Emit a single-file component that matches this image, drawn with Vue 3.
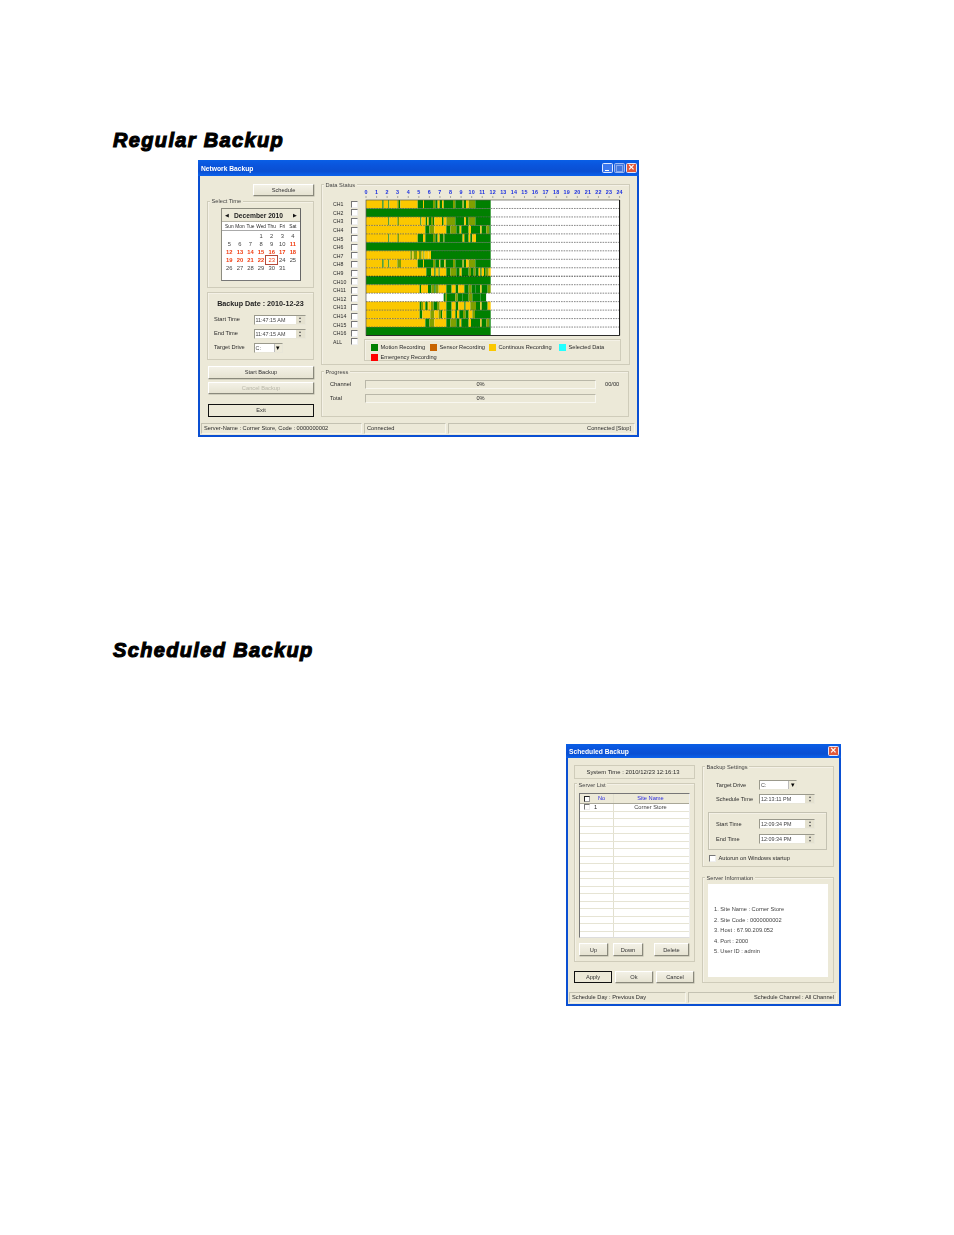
<script setup>
const hours = Array.from({ length: 25 }, (_, i) => i)
const HOUR = 10.567
const ROW = 8.47
const colors = { Y: '#fbc800', G: '#008000', O: '#7fa000', W: '#ffffff' }

// Each channel: colour letter + end position, in 1/3 px from the chart's left edge origin (137) to the end (511)
const rowsRaw = [
  'Y186 G190 Y204 G207 Y231 O236 G240 Y292 G308 Y311 G338 O345 G352 Y358 G365 Y370 G398 O405 G427 Y430 G437 Y445 O465 G511',
  'G511',
  'Y204 G207 Y231 O236 Y300 G303 Y316 G320 Y325 G332 O338 G342 Y365 G370 Y378 O405 G432 Y437 G445 O465 G511',
  'Y315 G327 O342 Y378 G390 O408 G418 Y423 G445 Y452 G480 Y484 G498 O507 G511',
  'Y204 G207 Y231 O236 Y292 G308 Y315 G338 O345 G352 Y358 G370 Y372 G427 Y432 G445 Y450 G456 Y467 G511',
  'G511',
  'Y270 O276 Y280 O290 Y296 O304 Y310 G312 Y325 Y332 G511',
  'Y186 G190 Y204 G207 Y231 O242 Y292 G308 Y311 G338 O345 G357 Y360 G372 Y376 G398 O405 G427 Y430 G437 Y445 O465 G511',
  'Y318 G333 Y342 G346 Y355 G358 Y378 G390 O408 G418 Y424 G445 O452 G460 O466 G475 Y480 G484 Y491 G496 O505 Y511',
  'G511',
  'Y298 G302 Y308 Y323 G333 O342 G346 O355 Y378 G394 Y406 G414 Y432 G445 O454 G466 G480 Y484 G502 O511',
  'W370 G376 O380 G405 O412 G427 G445 O456 G480 G498 W511',
  'Y298 G302 O308 Y315 G320 O324 Y332 O340 G350 O358 Y378 G394 Y406 G414 Y432 G436 Y450 O467 G480 Y484 G502 Y511',
  'Y298 G306 Y330 O342 Y355 O362 G366 Y378 G394 Y405 G410 Y417 G428 O436 G445 Y456 O464 G511',
  'Y315 G327 O342 Y378 G390 O408 G418 Y423 G445 Y452 G480 Y484 G498 O507 G511',
  'G511'
]
const segments = []
rowsRaw.forEach((raw, r) => {
  let start = 137
  raw.split(' ').forEach((s) => {
    const end = Number(s.slice(1))
    segments.push({
      key: r + '-' + end,
      x: +((start - 137) / 3).toFixed(2),
      y: +(r * ROW).toFixed(2),
      w: +((end - start) / 3).toFixed(2),
      fill: colors[s[0]]
    })
    start = end
  })
})
const dashes = Array.from({ length: 15 }, (_, i) => +((i + 1) * ROW).toFixed(2))
const channels = Array.from({ length: 16 }, (_, i) => 'CH' + (i + 1)).concat('ALL')
const dayNames = ['Sun', 'Mon', 'Tue', 'Wed', 'Thu', 'Fri', 'Sat']
const red = new Set([11, 12, 13, 14, 15, 16, 17, 18, 19, 20, 21, 22, 23])
const days = [null, null, null, 1, 2, 3, 4]
for (let d = 5; d <= 31; d++) days.push(d)
const legendTop = [
  { label: 'Motion Recording', color: '#008000', w: 59 },
  { label: 'Sensor Recording', color: '#c86400', w: 59 },
  { label: 'Continous Recording', color: '#fbc800', w: 70 },
  { label: 'Selected Data', color: '#22ffff', w: 50 }
]
const listRows = Array.from({ length: 17 }, (_, i) => i)
const info = ['1. Site Name  : Corner Store', '2. Site Code : 0000000002', '3. Host : 67.90.209.052', '4. Port : 2000', '5. User ID : admin']
</script>

<template>
  <div class="page">
    <h2 class="heading first">Regular Backup</h2>

    <div class="win win-a">
      <div class="title">
        <span>Network Backup</span>
        <div class="title-btns">
          <i class="tb"><b class="min"></b></i>
          <i class="tb off"><b class="max"></b></i>
          <i class="tb close">✕</i>
        </div>
      </div>
      <div class="a-body">
        <div class="a-left">
          <button class="btn sched">Schedule</button>
          <div class="group sel">
            <span class="legend">Select Time</span>
            <div class="cal">
              <div class="cal-head">
                <span class="arr">◀</span><b class="month">December 2010</b><span class="arr">▶</span>
              </div>
              <div class="cal-names"><span v-for="n in dayNames" :key="n">{{ n }}</span></div>
              <div class="cal-days">
                <span
                  v-for="(d, i) in days"
                  :key="i"
                  :class="{ red: red.has(d), today: d === 23 }"
                >{{ d }}</span>
              </div>
            </div>
          </div>
          <div class="group date">
            <div class="date-title">Backup Date : 2010-12-23</div>
            <div class="frow r1"><label>Start Time</label><div class="spin w56"><span>11:47:15 AM</span><em><u>▴</u><u>▾</u></em></div></div>
            <div class="frow r2"><label>End Time</label><div class="spin w56"><span>11:47:15 AM</span><em><u>▴</u><u>▾</u></em></div></div>
            <div class="frow r3"><label>Target Drive</label><div class="combo w29"><span>C:</span><em>▾</em></div></div>
          </div>
          <button class="btn wide start">Start Backup</button>
          <button class="btn wide cancel">Cancel Backup</button>
          <button class="btn wide exit">Exit</button>
        </div>

        <div class="a-right">
          <div class="group status">
            <span class="legend">Data Status</span>
            <div class="status-in">
              <div class="chs">
                <div v-for="c in channels" :key="c" class="ch"><span>{{ c }}</span><i class="cb"></i></div>
              </div>
              <div class="chart-col">
                <svg class="chart" width="262" height="153" viewBox="-4 -15 262 153">
                  <text v-for="h in hours" :key="h" :x="h * HOUR" y="-6.5" class="hr" text-anchor="middle">{{ h }}</text>
                  <line v-for="h in hours" :key="'t' + h" :x1="h * HOUR" :x2="h * HOUR" y1="-4" y2="-2" stroke="#777" stroke-width=".6" />
                  <rect x="0" y="0" width="253.6" height="135.5" fill="#fff" />
                  <rect v-for="s in segments" :key="s.key" :x="s.x" :y="s.y" :width="s.w" height="8.47" :fill="s.fill" />
                  <line v-for="(y, i) in dashes" :key="'d' + i" x1="0" x2="253.6" :y1="y" :y2="y" :stroke="i === 8 ? '#000' : '#555'" stroke-width=".7" stroke-dasharray="1.6 1" />
                  <rect x="0" y="0" width="253.6" height="135.5" fill="none" stroke="#5a5a50" stroke-width=".7" />
                  <line x1="253.6" x2="253.6" y1="0" y2="135.5" stroke="#000" stroke-width=".9" />
                  <line x1="0" x2="253.6" y1="135.5" y2="135.5" stroke="#222" stroke-width=".9" />
                </svg>
                <div class="legend-box">
                  <div class="lg-row">
                    <div v-for="l in legendTop" :key="l.label" class="lg" :style="{ width: l.w + 'px' }">
                      <i :style="{ background: l.color }"></i><span>{{ l.label }}</span>
                    </div>
                  </div>
                  <div class="lg-row">
                    <div class="lg"><i class="emer"></i><span>Emergency Recording</span></div>
                  </div>
                </div>
              </div>
            </div>
          </div>
          <div class="group progress">
            <span class="legend">Progress</span>
            <div class="prow"><label>Channel</label><div class="bar">0%</div><span class="cnt">00/00</span></div>
            <div class="prow"><label>Total</label><div class="bar">0%</div></div>
          </div>
        </div>
      </div>
      <div class="statusbar a-sb">
        <div class="cell c1">Server-Name : Corner Store, Code : 0000000002</div>
        <div class="cell c2">Connected</div>
        <div class="cell c3">Connected [Stop]</div>
      </div>
    </div>

    <h2 class="heading second">Scheduled Backup</h2>

    <div class="win win-b">
      <div class="title small">
        <span>Scheduled Backup</span>
        <div class="title-btns"><i class="tb close">✕</i></div>
      </div>
      <div class="b-body">
        <div class="b-left">
          <div class="systime">System Time : 2010/12/23 12:16:13</div>
          <div class="group servers">
            <span class="legend">Server List</span>
            <div class="list">
              <div class="lh"><div class="c-no"><i class="cb dark"></i><span>No</span></div><div class="c-site">Site Name</div></div>
              <div class="lr"><div class="c-no"><i class="cb"></i><span class="one">1</span></div><div class="c-site ink">Corner Store</div></div>
              <div v-for="r in listRows" :key="r" class="lr"><div class="c-no"></div><div class="c-site"></div></div>
            </div>
            <div class="list-btns">
              <button class="btn up">Up</button>
              <button class="btn down">Down</button>
              <button class="btn del">Delete</button>
            </div>
          </div>
          <div class="b-actions">
            <button class="btn act exit">Apply</button>
            <button class="btn act">Ok</button>
            <button class="btn act">Cancel</button>
          </div>
        </div>
        <div class="b-right">
          <div class="group settings">
            <span class="legend">Backup Settings</span>
            <div class="sr s1"><label>Target Drive</label><div class="combo w38"><span>C:</span><em>▾</em></div></div>
            <div class="sr s2"><label>Schedule Time</label><div class="spin w56"><span>12:13:11 PM</span><em><u>▴</u><u>▾</u></em></div></div>
            <div class="inner">
              <div class="sr"><label>Start Time</label><div class="spin w56"><span>12:09:34 PM</span><em><u>▴</u><u>▾</u></em></div></div>
              <div class="sr s5"><label>End Time</label><div class="spin w56"><span>12:09:34 PM</span><em><u>▴</u><u>▾</u></em></div></div>
            </div>
            <div class="auto"><i class="cb"></i><span>Autorun on Windows startup</span></div>
          </div>
          <div class="group infos">
            <span class="legend">Server Information</span>
            <div class="info-box"><p v-for="t in info" :key="t">{{ t }}</p></div>
          </div>
        </div>
      </div>
      <div class="statusbar b-sb">
        <div class="cell d1">Schedule Day : Previous Day</div>
        <div class="cell d2">Schedule Channel : All Channel</div>
      </div>
    </div>
  </div>
</template>

<style>
html, body { margin: 0; background: #fff; }
</style>

<style scoped>
.page {
  width: 954px;
  height: 1235px;
  overflow: hidden;
  background: #fff;
  font-family: "Liberation Sans", Arial, sans-serif;
  font-size: 5.7px;
  color: #2a2a2a;
  display: flow-root;
}
.heading {
  margin: 0 0 0 113px;
  height: 22px;
  line-height: 22px;
  font-size: 20px;
  font-weight: 700;
  font-style: italic;
  letter-spacing: 1.35px;
  color: #000;
  -webkit-text-stroke: 1.1px #000;
  white-space: nowrap;
}
.first { margin-top: 129px; }
.second { margin-top: 202px; }

.win {
  box-sizing: border-box;
  background: #ece9d8;
  border: 2px solid #0a4fd2;
  border-top: 0;
  display: flex;
  flex-direction: column;
  filter: blur(.3px);
}
.win-a { width: 441px; height: 277px; margin: 9px 0 0 198px; }
.win-b { width: 275px; height: 262px; margin: 83px 0 0 566px; }
.title {
  height: 16px;
  margin: 0 -2px;
  padding: 0 2px 0 3px;
  background: linear-gradient(#0a5fe6, #0a55dd 30%, #0a4fd2 70%, #0b62ec);
  color: #fff;
  font-weight: 700;
  font-size: 6.7px;
  display: flex;
  align-items: center;
  justify-content: space-between;
  flex: none;
}
.title.small { height: 14px; }
.title-btns { display: flex; gap: 1px; }
.tb {
  width: 11px; height: 10.5px;
  box-sizing: border-box;
  border: .5px solid #dfe8ff;
  border-radius: 1.5px;
  background: #3c78ee;
  font-style: normal;
  display: flex;
  align-items: center;
  justify-content: center;
  font-size: 7.5px;
  font-weight: 700;
  line-height: 1;
  color: #fff;
}
.tb.off { background: #5a86e0; opacity: .7; }
.tb.close { background: #e2593a; }
.min { width: 4px; height: 1.5px; background: #fff; margin-top: 5px; margin-right: 2px; }
.max { width: 5px; height: 5px; border: .5px solid #b9cdf7; border-top-width: 1.2px; }

.group {
  box-sizing: border-box;
  position: relative;
  border: 1px solid #cfccba;
  box-shadow: inset .5px .5px 0 #fbfaf3;
  flex: none;
}
.legend {
  position: absolute;
  left: 2px;
  top: -3px;
  line-height: 7px;
  padding: 0 1.5px;
  background: #ece9d8;
  color: #444;
  white-space: nowrap;
}
.sel .legend { top: -4px; }
.servers .legend { top: -2px; }
.btn {
  display: block;
  box-sizing: border-box;
  font: inherit;
  color: #333;
  padding: 0;
  background: linear-gradient(#f3f1e6, #e6e3d2);
  border: 1px solid;
  border-color: #fff #8a897c #8a897c #fff;
  box-shadow: .5px .5px 0 #b4b2a3;
}
.btn.exit { border: 1px solid #111; box-shadow: none; background: #ece9d8; }

/* window A */
.a-body { flex: 1; display: flex; padding: 8px 0 0 7px; gap: 7px; min-height: 0; }
.a-left { width: 107px; flex: none; }
.sched { width: 61px; height: 12px; margin-left: 46px; }
.sel { height: 87px; margin-top: 5px; padding: 6px 0 0 13px; }
.cal {
  box-sizing: border-box;
  width: 80px;
  height: 73px;
  background: #fff;
  border: 1px solid;
  border-color: #8d8c80 #666 #777 #8d8c80;
}
.cal-head {
  height: 12px;
  background: #ece9d8;
  display: flex;
  align-items: center;
  justify-content: space-between;
  padding: 0 3px;
  color: #222;
  font-size: 6.7px;
  border-bottom: .5px solid #b8b6a8;
}
.month { padding-right: 5px; }
.arr { font-size: 5px; color: #111; }
.cal-names {
  display: grid;
  grid-template-columns: repeat(7, 10.6px);
  padding: 2px 1px 0 2px;
  font-size: 4.8px;
  height: 6px;
  text-align: center;
  border-bottom: .5px solid #aaa;
}
.cal-days {
  display: grid;
  grid-template-columns: repeat(7, 10.6px);
  grid-auto-rows: 7.9px;
  padding: 1px 1px 0 2px;
  text-align: center;
  line-height: 8px;
  font-size: 5.8px;
  color: #444;
}
.cal-days .red { color: #f03c10; font-weight: 700; }
.cal-days .today { outline: .7px solid #b34a3a; outline-offset: -.5px; font-weight: 400; }
.date { height: 68px; margin-top: 4px; }
.date-title { text-align: center; margin-top: 7px; font-weight: 700; font-size: 7.2px; color: #222; line-height: 8px; }
.frow { display: flex; align-items: center; padding-left: 6px; height: 10px; }
.frow label { width: 39.5px; font-size: 5.7px; margin-top: -1.5px; }
.r1 { margin-top: 7px; }
.r2 { margin-top: 4px; }
.r3 { margin-top: 4px; }
.spin, .combo {
  box-sizing: border-box;
  height: 10px;
  background: #fff;
  border: 1px solid;
  border-color: #9a998c #e8e6d8 #e8e6d8 #9a998c;
  display: flex;
  align-items: center;
  justify-content: space-between;
  padding-left: 1px;
  color: #444;
  font-size: 5.4px;
}
.w56 { width: 52px; }
.w29 { width: 29px; }
.w38 { width: 38px; }
.spin em {
  font-style: normal;
  width: 9px;
  height: 8px;
  display: flex;
  flex-direction: column;
  background: #e4e1cf;
  text-align: center;
  font-size: 4px;
  line-height: 4px;
  color: #555;
}
.spin u { text-decoration: none; height: 4px; display: block; }
.combo em {
  font-style: normal;
  width: 7px;
  height: 8px;
  background: #ece9d8;
  border-left: .5px solid #bbb;
  text-align: center;
  font-size: 7px;
  line-height: 8px;
  color: #000;
}
.wide { height: 12.5px; margin-left: 1px; width: 106px; }
.start { margin-top: 6px; }
.cancel { margin-top: 3px; color: #b9b7a9; }
.wide.exit { margin-top: 10px; }

.a-right { width: 309px; flex: none; }
.status { height: 181px; }
.status-in { display: flex; }
.chs { width: 25px; flex: none; padding-top: 15px; margin-left: 11px; }
.ch { display: flex; align-items: center; justify-content: space-between; height: 8.6px; }
.ch span { width: 18px; font-size: 5.2px; }
.cb {
  box-sizing: border-box;
  width: 7px;
  height: 7px;
  background: #fff;
  border: 1px solid;
  border-color: #777 #eee #eee #777;
  flex: none;
  display: block;
}
.cb.dark { border-color: #222 #999 #999 #222; }
.chart-col { margin-left: 7.5px; }
.chart { display: block; margin-left: -4px; overflow: visible; }
.hr { font-size: 5.4px; font-weight: 700; fill: #1a2fe0; letter-spacing: .2px; }
.legend-box {
  box-sizing: border-box;
  width: 257px;
  height: 22px;
  margin: 1px 0 0 -2px;
  border: 1px solid #cfccba;
  padding: 2px 0 0 6px;
  box-shadow: inset .5px .5px 0 #fbfaf3;
}
.lg-row { display: flex; height: 10px; gap: 0; align-items: center; }
.lg { display: flex; align-items: center; gap: 3px; white-space: nowrap; flex: none; }
.lg i { width: 7px; height: 7px; flex: none; display: block; }
.lg .emer { background: #ff0000; }
.progress { height: 46px; margin-top: 6px; padding-top: 7px; width: 308px; }
.prow { display: flex; align-items: center; height: 10px; margin-bottom: 4px; padding-left: 8px; }
.prow label { width: 35px; }
.bar {
  box-sizing: border-box;
  width: 231px;
  height: 9px;
  border: 1px solid;
  border-color: #b9b7a8 #f8f7f0 #f8f7f0 #b9b7a8;
  text-align: center;
  line-height: 7px;
}
.cnt { margin-left: 9px; }

.statusbar { display: flex; flex: none; gap: 2px; }
.a-sb { height: 11px; margin: 0 2px 1px 1px; }
.cell {
  box-sizing: border-box;
  border: 1px solid;
  border-color: #c4c2b2 #f6f5ec #f6f5ec #c4c2b2;
  padding-left: 2px;
  line-height: 9px;
  white-space: nowrap;
}
.c1 { width: 161px; }
.c2 { width: 82px; }
.c3 { flex: 1; text-align: right; padding-right: 3px; }

/* window B */
.b-body { flex: 1; display: flex; min-height: 0; padding: 7px 0 0 6px; gap: 7px; }
.b-left { width: 121px; flex: none; }
.systime {
  box-sizing: border-box;
  height: 14px;
  border: 1px solid #cfccba;
  text-align: center;
  line-height: 12px;
  font-size: 5.9px;
  padding-right: 3px;
}
.servers { height: 179px; margin-top: 4px; padding: 9px 0 0 4px; }
.list {
  box-sizing: border-box;
  width: 111px;
  height: 145px;
  overflow: hidden;
  background: #fff;
  border: 1px solid;
  border-color: #777 #eee #ddd #777;
}
.lh { display: flex; height: 9px; background: #ece9d8; color: #2a2ae0; border-bottom: 1px solid #a9a798; line-height: 9px; }
.lr { display: flex; height: 7.5px; box-sizing: border-box; border-bottom: .5px solid #e6e4d4; line-height: 7px; }
.c-no { width: 34px; flex: none; box-sizing: border-box; display: flex; align-items: center; padding-left: 4px; gap: 8px; border-right: .5px solid #e2e0d0; }
.c-no .cb { width: 6px; height: 6px; }
.c-no .one { margin-left: -4px; }
.c-site { flex: 1; text-align: center; padding-right: 2px; }
.ink { color: #444; }
.list-btns { display: flex; margin-top: 5px; }
.list-btns .btn { height: 13px; }
.up { width: 29px; }
.down { width: 30px; margin-left: 5px; }
.del { width: 35px; margin-left: 11px; }
.b-actions { display: flex; gap: 3px; margin-top: 9px; }
.act { width: 38px; height: 12px; }
.b-right { width: 132px; flex: none; padding-top: 1px; }
.settings { height: 101px; }
.sr { display: flex; align-items: center; height: 10px; }
.sr label { width: 43px; padding-left: 13px; box-sizing: content-box; flex: none; font-size: 5.6px; }
.s1 { margin-top: 13px; }
.s2 { margin-top: 4px; }
.s5 { margin-top: 5px; }
.inner {
  box-sizing: border-box;
  width: 119px;
  height: 38px;
  margin: 8px 0 0 5px;
  padding-top: 6px;
  border: 1px solid #c4c2b2;
  box-shadow: inset .5px .5px 0 #fbfaf3;
}
.inner .sr label { width: 37px; padding-left: 7px; }
.inner .spin { width: 56px; margin-left: 6px; }
.s2 .spin { width: 56px; }
.auto { display: flex; align-items: center; gap: 2.5px; margin: 4px 0 0 6px; height: 8px; }
.infos { height: 106px; margin-top: 10px; padding: 6px 0 0 5px; }
.info-box { box-sizing: border-box; width: 120px; height: 93px; background: #fff; padding: 20px 0 0 6px; color: #444; }
.info-box p { margin: 0; height: 10.6px; line-height: 10.6px; }
.b-sb { height: 11px; margin: 0 2px 1px 1px; }
.d1 { width: 117px; }
.d2 { flex: 1; text-align: right; padding-right: 2px; }
</style>
